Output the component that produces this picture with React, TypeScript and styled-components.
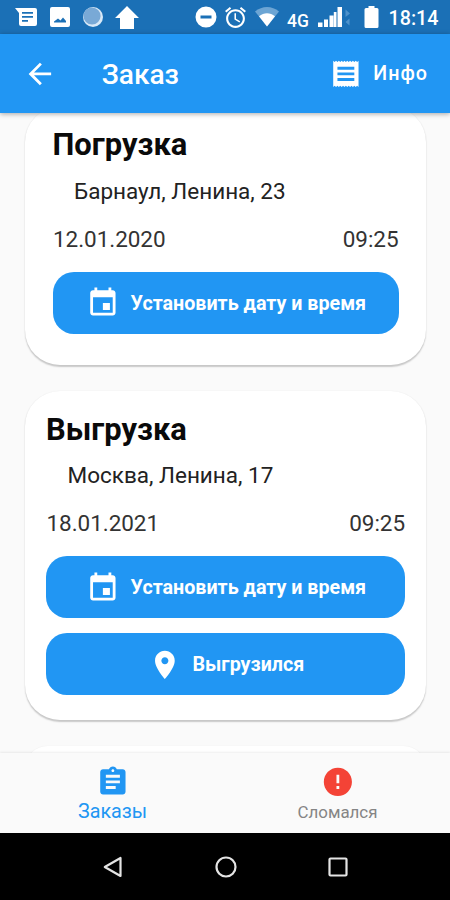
import React from "react";
import styled, { createGlobalStyle } from "styled-components";

const BLUE = "#2196f3";

const GlobalStyle = createGlobalStyle`
  * { box-sizing: border-box; }
  body { margin: 0; background: #fafafa; }
`;

const Screen = styled.div`
  width: 450px;
  height: 900px;
  display: flex;
  flex-direction: column;
  overflow: hidden;
  background: #fafafa;
  font-family: Roboto, "Liberation Sans", sans-serif;
`;

const StatusBar = styled.div`
  height: 34px;
  flex: none;
  display: flex;
  align-items: center;
  background: #1b70b6;
  color: #fff;
`;

const StatusIcon = styled.svg<{ $gap: number }>`
  flex: none;
  margin-left: ${(p) => p.$gap}px;
  fill: #fff;
`;

const Network = styled.span`
  margin: 8px 0 0 8px;
  width: 23px;
  font-size: 17.5px;
  font-weight: 500;
  line-height: 20px;
`;

const Clock = styled.span`
  margin: 3px 0 0 10px;
  font-size: 19.7px;
  font-weight: 500;
  line-height: 24px;
`;

const AppBar = styled.header`
  position: relative;
  z-index: 1;
  height: 79px;
  flex: none;
  display: flex;
  align-items: center;
  padding: 0 22px 0 23px;
  background: ${BLUE};
  color: #fff;
  box-shadow: 0 1px 5px rgba(0, 0, 0, 0.34);
`;

const AppTitle = styled.h1`
  flex: 1;
  margin: 2px 0 0 45px;
  font-size: 28.1px;
  font-weight: 500;
  line-height: 34px;
`;

const InfoAction = styled.button`
  display: flex;
  align-items: center;
  gap: 11px;
  padding: 0;
  border: 0;
  background: none;
  color: #fff;
  font: 500 19.7px/24px Roboto, sans-serif;
  letter-spacing: 1px;
`;

const Icon = styled.svg<{ $size?: number }>`
  display: block;
  flex: none;
  width: ${(p) => p.$size ?? 33.75}px;
  height: ${(p) => p.$size ?? 33.75}px;
  fill: currentColor;
`;

const Content = styled.main`
  flex: 1;
  min-height: 0;
  overflow: hidden;
  display: flex;
  flex-direction: column;
  gap: 26.5px;
  padding: 0 24px 0 25px;
`;

const Card = styled.section<{ $inset: number; $first?: boolean }>`
  flex: none;
  margin-top: ${(p) => (p.$first ? "-6.5px" : "0")};
  padding: 20.5px ${(p) => p.$inset}px ${(p) => p.$inset + 3.5}px;
  border-radius: 35px;
  background: #fff;
  box-shadow: 0 1.2px 1.5px rgba(0, 0, 0, 0.2), 0 0 2px rgba(0, 0, 0, 0.04);
`;

const CardTitle = styled.h2`
  margin: 0;
  color: #0a0a0a;
  font-size: 30.9px;
  font-weight: 700;
  line-height: 36px;
`;

const Address = styled.p`
  margin: 13.5px 0 0 21.5px;
  color: #222;
  font-size: 22.5px;
  line-height: 28px;
`;

const Schedule = styled.div`
  display: flex;
  justify-content: space-between;
  margin: 20px 0 19px;
  padding-left: 0.5px;
  color: #333;
  font-size: 22.5px;
  line-height: 28px;
  letter-spacing: -0.05px;
`;

const ActionButton = styled.button`
  width: 100%;
  height: 62px;
  display: flex;
  align-items: center;
  justify-content: center;
  gap: 11px;
  padding: 1px 0 0 1px;
  border: 0;
  border-radius: 21px;
  background: ${BLUE};
  color: #fff;
  font: 700 19.7px/24px Roboto, sans-serif;

  & + & {
    margin-top: 15px;
  }
`;

const ButtonLabel = styled.span`
  padding-top: 1px;
`;

const Tabs = styled.nav`
  position: relative;
  z-index: 1;
  height: 80px;
  flex: none;
  display: grid;
  grid-template-columns: 1fr 1fr;
  background: #fafafa;
  box-shadow: 0 -1px 2px rgba(0, 0, 0, 0.07);
`;

const Tab = styled.div<{ $active?: boolean }>`
  display: flex;
  flex-direction: column;
  align-items: center;
  padding-top: 12px;
  color: ${(p) => (p.$active ? BLUE : "#858585")};
  font-size: ${(p) => (p.$active ? 19.7 : 16.9)}px;
  line-height: 26px;
`;

const SystemNav = styled.div`
  height: 67px;
  flex: none;
  display: flex;
  align-items: center;
  justify-content: center;
  gap: 90px;
  padding-left: 1px;
  background: #000;
`;

const SystemIcon = styled.svg`
  width: 22px;
  height: 22px;
  fill: none;
  stroke: #e4e4e4;
  stroke-width: 2.2;
  stroke-linejoin: round;
`;

const PATHS = {
  back: "M20 11H7.83l5.59-5.59L12 4l-8 8 8 8 1.41-1.41L7.83 13H20v-2z",
  receipt:
    "M18 17H6v-2h12v2zm0-4H6v-2h12v2zm0-4H6V7h12v2zM3 21.4l1-.9 1 .9 1-.9 1 .9 1-.9 1 .9 1-.9 1 .9 1-.9 1 .9 1-.9 1 .9 1-.9 1 .9 1-.9 1 .9 1-.9 1 .9V2.600l-1 .9-1-.9-1 .9-1-.9-1 .9-1-.9-1 .9-1-.9-1 .9-1-.9-1 .9-1-.9-1 .9-1-.9-1 .9-1-.9-1 .9-1-.9z",
  event:
    "M17 12h-5v5h5v-5zM16 1v2H8V1H6v2H5c-1.11 0-1.99.9-1.99 2L3 19c0 1.1.89 2 2 2h14c1.1 0 2-.9 2-2V5c0-1.1-.9-2-2-2h-1V1h-2zm3 18H5V8h14v11z",
  place:
    "M12 2C8.13 2 5 5.13 5 9c0 5.25 7 13 7 13s7-7.75 7-13c0-3.87-3.13-7-7-7zm0 9.5c-1.38 0-2.5-1.12-2.5-2.5s1.12-2.5 2.5-2.5 2.5 1.12 2.5 2.5-1.12 2.5-2.5 2.5z",
  assignment:
    "M19 3h-4.18C14.4 1.84 13.3 1 12 1c-1.3 0-2.4.84-2.82 2H5c-1.1 0-2 .9-2 2v14c0 1.1.9 2 2 2h14c1.1 0 2-.9 2-2V5c0-1.1-.9-2-2-2zm-7 0c.55 0 1 .45 1 1s-.45 1-1 1-1-.45-1-1 .45-1 1-1zm2 14H7v-2h7v2zm3-4H7v-2h10v2zm0-4H7V7h10v2z",
  error:
    "M12 2C6.48 2 2 6.48 2 12s4.48 10 10 10 10-4.48 10-10S17.52 2 12 2zm1 15h-2v-2h2v2zm0-4h-2V7h2v6z",
};

const Glyph = ({ name, fill }: { name: keyof typeof PATHS; fill?: string }) => (
  <Icon viewBox="0 0 24 24">
    <path d={PATHS[name]} fill={fill} />
  </Icon>
);

const StatusIcons = () => (
  <>
    <StatusIcon $gap={15} width="22" height="18" viewBox="0 0 22 18">
      <path
        fillRule="evenodd"
        d="M0 0h20a2 2 0 0 1 2 2v14a2 2 0 0 1-2 2H6a2 2 0 0 1-2-2V5zM7 4v1.7h11V4zm0 4v1.7h11V8zm0 4v1.7h6V12z"
      />
    </StatusIcon>
    <StatusIcon $gap={13} width="20" height="20" viewBox="0 0 20 20">
      <path
        fillRule="evenodd"
        d="M2 0h16a2 2 0 0 1 2 2v16a2 2 0 0 1-2 2H2a2 2 0 0 1-2-2V2a2 2 0 0 1 2-2zm2 15.500h12v-1.500l-3-3.500-2.500 3-2.500-2-4 3z"
      />
    </StatusIcon>
    <StatusIcon $gap={13} width="20" height="20" viewBox="0 0 20 20">
      <circle cx="10" cy="10" r="10" fill="#d9e9f7" />
      <circle cx="9" cy="9" r="8.600" fill="#79a9d6" />
    </StatusIcon>
    <StatusIcon $gap={12} width="24" height="23" viewBox="0 0 24 23">
      <path d="M12 0 24 12h-5v11H5V12H0z" />
    </StatusIcon>
    <StatusIcon $gap={56} width="22" height="22" viewBox="0 0 22 22">
      <path
        fillRule="evenodd"
        d="M11 .5a10.500 10.500 0 1 1 0 21 10.500 10.500 0 0 1 0-21zM5.500 9.500v3h11v-3z"
      />
    </StatusIcon>
    <StatusIcon $gap={7} width="23" height="23" viewBox="1 1 22 22">
      <path d="M22 5.72l-4.6-3.86-1.29 1.53 4.6 3.86L22 5.72zM7.88 3.39L6.6 1.86 2 5.71l1.29 1.53 4.59-3.85zM12.5 8H11v6l4.75 2.85.75-1.23-4-2.37V8zM12 4c-4.97 0-9 4.03-9 9s4.02 9 9 9c4.97 0 9-4.03 9-9s-4.03-9-9-9zm0 16c-3.87 0-7-3.13-7-7s3.13-7 7-7 7 3.13 7 7-3.13 7-7 7z" />
    </StatusIcon>
    <StatusIcon $gap={8} width="24" height="20" viewBox="0 0 24 20">
      <path d="M0 4.500C7-1.500 17-1.500 24 4.500L12 19.500z" fill="#6ca5d4" />
      <path d="M4 9.300c5-4 11-4 16 0l-8 10.200z" />
    </StatusIcon>
    <Network>4G</Network>
    <StatusIcon $gap={7.5} width="33" height="20" viewBox="0 0 33 20">
      <path d="M0 15.500h4.500V20H0zM6 12.500h4V20H6zM11.500 8.500h4V20h-4zM15.800 5h2.700v15h-2.700zM19.500 0H24v20h-4.500z" />
      <path d="M27.500 2.500 32 6.500l-4.500 3.500zM31.500 11.500v7l-4-3.500z" fill="#4e92cb" />
    </StatusIcon>
    <StatusIcon $gap={13} width="15" height="22" viewBox="0 0 15 22">
      <path d="M4.500 0h6v2H13a1.500 1.500 0 0 1 1.500 1.500v17A1.500 1.500 0 0 1 13 22H2a1.500 1.500 0 0 1-1.500-1.500v-17A1.500 1.500 0 0 1 2 2h2.500z" />
    </StatusIcon>
  </>
);

export default function App() {
  return (
    <>
      <GlobalStyle />
      <Screen>
        <StatusBar>
          <StatusIcons />
          <Clock>18:14</Clock>
        </StatusBar>
        <AppBar>
          <Glyph name="back" />
          <AppTitle>Заказ</AppTitle>
          <InfoAction>
            <Glyph name="receipt" />
            <ButtonLabel>Инфо</ButtonLabel>
          </InfoAction>
        </AppBar>
        <Content>
          <Card $inset={27.5} $first>
            <CardTitle>Погрузка</CardTitle>
            <Address>Барнаул, Ленина, 23</Address>
            <Schedule>
              <span>12.01.2020</span>
              <span>09:25</span>
            </Schedule>
            <ActionButton>
              <Glyph name="event" />
              <ButtonLabel>Установить дату и время</ButtonLabel>
            </ActionButton>
          </Card>
          <Card $inset={21}>
            <CardTitle>Выгрузка</CardTitle>
            <Address>Москва, Ленина, 17</Address>
            <Schedule>
              <span>18.01.2021</span>
              <span>09:25</span>
            </Schedule>
            <ActionButton>
              <Glyph name="event" />
              <ButtonLabel>Установить дату и время</ButtonLabel>
            </ActionButton>
            <ActionButton>
              <Glyph name="place" />
              <ButtonLabel>Выгрузился</ButtonLabel>
            </ActionButton>
          </Card>
          <Card $inset={21} />
        </Content>
        <Tabs>
          <Tab $active>
            <Glyph name="assignment" />
            Заказы
          </Tab>
          <Tab>
            <Glyph name="error" fill="#f44336" />
            Сломался
          </Tab>
        </Tabs>
        <SystemNav>
          <SystemIcon viewBox="0 0 22 22">
            <path d="M17.500 2v18L1.800 11z" />
          </SystemIcon>
          <SystemIcon viewBox="0 0 22 22">
            <circle cx="11" cy="11" r="9.500" />
          </SystemIcon>
          <SystemIcon viewBox="0 0 22 22">
            <rect x="2.500" y="2.500" width="17" height="17" rx="1" />
          </SystemIcon>
        </SystemNav>
      </Screen>
    </>
  );
}
